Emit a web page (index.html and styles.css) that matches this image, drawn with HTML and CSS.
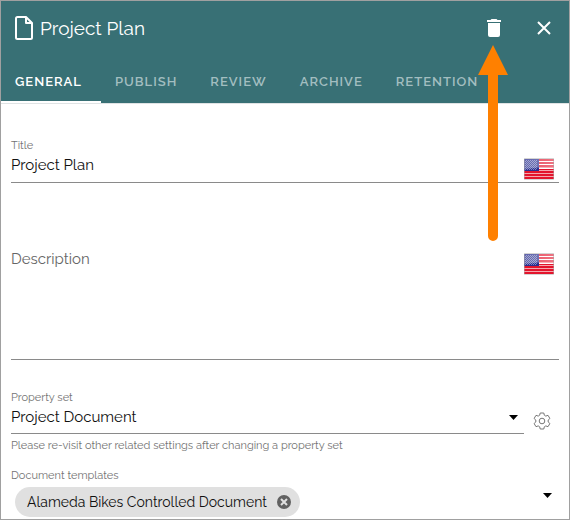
FILE: index.html
```html
<!DOCTYPE html>
<html lang="en">
<head>
<meta charset="utf-8">
<meta name="viewport" content="width=device-width, initial-scale=1">
<title>Project Plan</title>
<link rel="stylesheet" href="styles.css">
</head>
<body>
<svg class="defs" aria-hidden="true">
  <defs>
    <pattern id="stars" width="2" height="2" patternUnits="userSpaceOnUse">
      <path d="M0 0h1v1H0zM1 1h1v1H1z" fill="#8087c0"/>
    </pattern>
    <linearGradient id="shine" x1="0" y1="0" x2="1" y2="0">
      <stop offset="0" stop-color="#fff" stop-opacity=".25"/>
      <stop offset="1" stop-color="#fff" stop-opacity=".4"/>
    </linearGradient>
    <symbol id="flag" viewBox="0 0 30 22">
      <path fill="#fff" d="M0 0h30v22H0z"/>
      <path fill="#e3142c" d="M0 1h30v2H0zM0 4h30v2H0zM0 7h30v2H0zM0 11h30v1H0zM0 13h30v2H0zM0 16h30v2H0zM0 19h30v2H0z"/>
      <path fill="#f4a6ad" d="M0 9h30v1H0zM0 12h30v1H0zM0 15h30v1H0zM0 18h30v1H0z"/>
      <path fill="#2b3090" d="M0 1h15v12H0z"/>
      <path fill="url(#stars)" d="M1 2h12v10H1z"/>
      <path fill="url(#shine)" d="M0 0h30v9Q15 9 0 11z"/>
      <path fill="none" stroke="#aaa" stroke-opacity=".5" d="M.5.5h29v21H.5z"/>
    </symbol>
  </defs>
</svg>
<main class="panel">
  <header class="header">
    <div class="titlebar">
      <svg class="doc-icon" viewBox="0 0 18 24" aria-hidden="true"><path d="M2.500 1h8.500l6 6v14.500a1.500 1.500 0 0 1-1.500 1.500h-13a1.500 1.500 0 0 1-1.500-1.500v-19A1.500 1.500 0 0 1 2.500 1zM11 1v6h6"/></svg>
      <h1 class="title">Project Plan</h1>
      <button class="icon-button" type="button" aria-label="Delete">
        <svg class="trash-icon" viewBox="0 0 14 18" aria-hidden="true"><path d="M0 1h3.500l1-1h5l1 1H14v2H0zM1 4h12v12a2 2 0 0 1-2 2H3a2 2 0 0 1-2-2z"/></svg>
      </button>
      <button class="icon-button" type="button" aria-label="Close">
        <svg class="close-icon" viewBox="0 0 14 14" aria-hidden="true"><path d="M1 1l12 12M13 1L1 13"/></svg>
      </button>
    </div>
    <nav class="tabs" aria-label="Settings">
      <a class="tab active" href="#general" aria-current="page">GENERAL</a>
      <a class="tab" href="#publish">PUBLISH</a>
      <a class="tab" href="#review">REVIEW</a>
      <a class="tab" href="#archive">ARCHIVE</a>
      <a class="tab" href="#retention">RETENTION</a>
    </nav>
  </header>
  <form class="form" id="general">
    <div class="field">
      <label class="label" for="title">Title</label>
      <div class="control underlined">
        <input class="input" id="title" type="text" value="Project Plan">
        <svg class="flag" role="img" aria-label="English (US)"><use href="#flag"/></svg>
      </div>
    </div>
    <div class="field description">
      <div class="control multiline underlined">
        <textarea class="input" id="description" aria-label="Description" placeholder="Description"></textarea>
        <svg class="flag" role="img" aria-label="English (US)"><use href="#flag"/></svg>
      </div>
    </div>
    <div class="field property">
      <label class="label" for="property-set">Property set</label>
      <div class="control">
        <div class="select-box underlined">
          <select class="input" id="property-set"><option>Project Document</option></select>
          <svg class="caret" viewBox="0 0 9 5" aria-hidden="true"><path d="M0 0h9L4.500 5z"/></svg>
        </div>
        <button class="gear-button" type="button" aria-label="Property set settings">
          <svg class="gear-icon" viewBox="0 0 18 18" aria-hidden="true"><path d="M7.200 1h3.600l.5 2.200 1.500.9 2.200-.8 1.900 3.200-1.700 1.500v2l1.700 1.500-1.900 3.200-2.200-.8-1.500.9-.5 2.200H7.200l-.5-2.200-1.500-.9-2.200.8-1.900-3.200L2.800 10V8L1.100 6.500 3 3.300l2.200.8 1.500-.9z"/><circle cx="9" cy="9" r="2.800"/></svg>
        </button>
      </div>
      <p class="hint">Please re-visit other related settings after changing a property set</p>
    </div>
    <div class="field templates">
      <span class="label" id="templates-label">Document templates</span>
      <div class="chips" role="group" aria-labelledby="templates-label">
        <span class="chip">Alameda Bikes Controlled Document
          <button class="chip-remove" type="button" aria-label="Remove Alameda Bikes Controlled Document">
            <svg viewBox="0 0 14 14" aria-hidden="true"><circle cx="7" cy="7" r="7"/><path d="M4 4l6 6M10 4l-6 6"/></svg>
          </button>
        </span>
        <button class="open-button" type="button" aria-label="Choose templates">
          <svg class="caret" viewBox="0 0 9 5" aria-hidden="true"><path d="M0 0h9L4.500 5z"/></svg>
        </button>
      </div>
    </div>
  </form>
  <svg class="pointer" viewBox="0 0 30 196" aria-hidden="true"><path d="M15 0l15 30H20v161a5 5 0 0 1-10 0V30H0z"/></svg>
</main>
</body>
</html>
```
FILE: styles.css
```css
* {
  box-sizing: border-box;
}

body {
  margin: 0;
  font-family: Raleway, Lato, sans-serif;
  font-size: 15px;
  line-height: 20px;
  color: #111;
  background: #fff;
}

button,
input,
select,
textarea {
  margin: 0;
  padding: 0;
  border: 0;
  border-radius: 0;
  background: none;
  font: inherit;
  color: inherit;
}

button {
  display: flex;
  align-items: center;
  justify-content: center;
}

svg {
  display: block;
  flex: none;
}

.defs {
  position: absolute;
  width: 0;
  height: 0;
}

.panel {
  position: relative;
  min-height: 100vh;
  border: 1px solid #a0a0a0;
}

.header {
  background: #387075;
  color: #fff;
  box-shadow: 0 1px #dfe3e4;
}

.titlebar {
  display: flex;
  align-items: center;
  height: 54px;
  padding: 0 11px 0 14px;
}

.doc-icon {
  width: 18px;
  height: 24px;
  fill: none;
  stroke: #fff;
  stroke-width: 2;
  stroke-linejoin: round;
}

.title {
  flex: 1;
  margin: 0 0 0 7px;
  font-size: 19px;
  line-height: 24px;
  font-weight: 400;
}

.icon-button {
  width: 28px;
  height: 28px;
  margin-left: 22px;
}

.trash-icon {
  width: 14px;
  height: 18px;
  fill: #fff;
}

.close-icon {
  width: 14px;
  height: 14px;
  stroke: #fff;
  stroke-width: 2;
}

.tabs {
  display: flex;
  height: 48px;
}

.tab {
  padding: 17px 19px 9px 14px;
  border-bottom: 2px solid transparent;
  font-size: 13px;
  font-weight: 600;
  letter-spacing: 1px;
  color: #a3bec0;
  text-decoration: none;
}

.tab.active {
  color: #fff;
  border-bottom-color: #fff;
}

.form {
  padding: 34px 10px 0;
}

.label,
.hint {
  display: block;
  margin: 0;
  font-size: 11px;
  line-height: 18px;
  color: #737373;
}

.control {
  display: flex;
  align-items: center;
}

.underlined {
  border-bottom: 1px solid #8a8a8a;
}

.input {
  flex: 1;
  min-width: 0;
  height: 27px;
  padding-bottom: 7px;
  outline: 0;
}

.flag {
  width: 30px;
  height: 22px;
  margin-right: 5px;
}

.description {
  margin-top: 66px;
}

.multiline {
  align-items: flex-start;
}

.multiline .input {
  height: 110px;
  resize: none;
}

.multiline .input::placeholder {
  color: #666;
  opacity: 1;
}

.multiline .flag {
  margin-top: 4px;
}

.property {
  margin-top: 29px;
}

.select-box {
  display: flex;
  flex: 1;
  position: relative;
}

.select-box .input {
  appearance: none;
  height: 26px;
}

.caret {
  width: 9px;
  height: 5px;
}

.select-box .caret {
  position: absolute;
  top: 8px;
  right: 6px;
  pointer-events: none;
}

.gear-button {
  width: 35px;
  height: 26px;
}

.gear-icon {
  width: 18px;
  height: 18px;
  fill: none;
  stroke: #777;
  stroke-linejoin: round;
}

.hint {
  margin-top: 3px;
}

.templates {
  margin-top: 12px;
}

.chips {
  display: flex;
  align-items: flex-start;
  justify-content: space-between;
  padding: 2px 3px 0 4px;
}

.chip {
  display: flex;
  align-items: center;
  gap: 10px;
  height: 30px;
  padding: 0 9px 0 12px;
  border-radius: 15px;
  background: #e0e0e0;
  font-size: 14px;
}

.chip-remove svg {
  width: 14px;
  height: 14px;
  fill: #616161;
  stroke: none;
}

.chip-remove path {
  stroke: #e0e0e0;
  stroke-width: 2;
}

.open-button {
  width: 17px;
  height: 16px;
}

.pointer {
  position: absolute;
  top: 44px;
  right: 61px;
  width: 30px;
  height: 196px;
  fill: #ff8000;
  pointer-events: none;
}
```
